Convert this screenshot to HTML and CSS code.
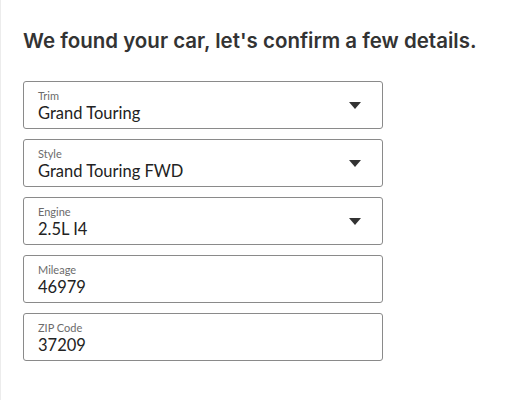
FILE: index.html
```html
<!DOCTYPE html>
<html>
<head>
<meta charset="utf-8">
<link rel="stylesheet" href="styles.css">
</head>
<body>
<div class="page">
  <h1 class="title">We found your car, let's confirm a few details.</h1>
  <div class="fields">
    <div class="field select">
      <div class="text"><span class="label">Trim</span><span class="value">Grand Touring</span></div>
      <span class="caret"></span>
    </div>
    <div class="field select">
      <div class="text"><span class="label">Style</span><span class="value">Grand Touring FWD</span></div>
      <span class="caret"></span>
    </div>
    <div class="field select">
      <div class="text"><span class="label">Engine</span><span class="value">2.5L I4</span></div>
      <span class="caret"></span>
    </div>
    <div class="field">
      <div class="text"><span class="label">Mileage</span><span class="value">46979</span></div>
    </div>
    <div class="field">
      <div class="text"><span class="label">ZIP Code</span><span class="value">37209</span></div>
    </div>
  </div>
</div>
</body>
</html>
```
FILE: styles.css
```css
html, body {
  margin: 0;
  padding: 0;
  background: #fff;
}
body {
  font-family: "Lato", "Open Sans", sans-serif;
  color: #2b2b2b;
}
.page {
  box-sizing: border-box;
  height: 400px;
  border-left: 1px solid #ececec;
  padding: 28px 0 0 22px;
}
.title {
  margin: 0 0 27px 0;
  font-family: "Inter", "Lato", sans-serif;
  font-size: 20.5px;
  line-height: 26px;
  font-weight: 600;
  letter-spacing: 0;
  color: #333;
}
.fields {
  display: flex;
  flex-direction: column;
  gap: 10px;
  width: 360px;
}
.field {
  box-sizing: border-box;
  height: 48px;
  border: 1px solid #8a8a8a;
  border-radius: 3px;
  display: flex;
  align-items: center;
  padding: 1px 21px 0 14px;
}
.text {
  flex: 1;
  display: flex;
  flex-direction: column;
}
.label {
  font-size: 11px;
  line-height: 14px;
  color: #6b6b6b;
}
.value {
  font-size: 16.5px;
  line-height: 20px;
  color: #222;
}
.caret {
  width: 0;
  height: 0;
  border-left: 6px solid transparent;
  border-right: 6px solid transparent;
  border-top: 7px solid #333;
}
```
